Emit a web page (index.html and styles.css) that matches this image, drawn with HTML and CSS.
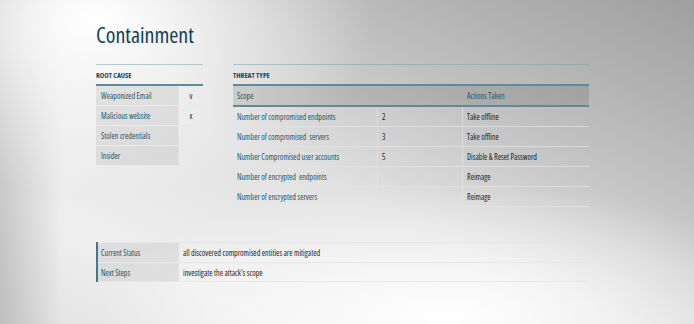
FILE: index.html
```html
<!DOCTYPE html>
<html>
<head>
<meta charset="utf-8">
<link rel="stylesheet" href="styles.css">
</head>
<body>
<div class="page">
  <h1 class="title">Containment</h1>
  <div class="top-row">
    <section class="panel root">
      <div class="panel-head">ROOT CAUSE</div>
      <div class="rc-table">
        <div class="rc-row"><div class="rc-label">Weaponized Email</div><div class="rc-val">v</div></div>
        <div class="rc-row"><div class="rc-label">Malicious website</div><div class="rc-val">x</div></div>
        <div class="rc-row"><div class="rc-label">Stolen credentials</div><div class="rc-val"></div></div>
        <div class="rc-row"><div class="rc-label">Insider</div><div class="rc-val"></div></div>
      </div>
    </section>
    <section class="panel threat">
      <div class="panel-head">THREAT TYPE</div>
      <div class="tt-table">
        <div class="tt-row tt-header"><div class="tt-scope">Scope</div><div class="tt-num"></div><div class="tt-act tt-act-h">Actions Taken</div></div>
        <div class="tt-row"><div class="tt-scope">Number of compromised endpoints</div><div class="tt-num">2</div><div class="tt-act">Take offline</div></div>
        <div class="tt-row"><div class="tt-scope">Number of compromised&nbsp; servers</div><div class="tt-num">3</div><div class="tt-act">Take offline</div></div>
        <div class="tt-row"><div class="tt-scope">Number Compromised user accounts</div><div class="tt-num">5</div><div class="tt-act">Disable &amp; Reset Password</div></div>
        <div class="tt-row"><div class="tt-scope">Number of encrypted&nbsp; endpoints</div><div class="tt-num"></div><div class="tt-act">Reimage</div></div>
        <div class="tt-row"><div class="tt-scope">Number of encrypted servers</div><div class="tt-num"></div><div class="tt-act">Reimage</div></div>
      </div>
    </section>
  </div>
  <div class="status">
    <div class="st-row"><div class="st-label">Current Status</div><div class="st-val">all discovered compromised entities are mitigated</div></div>
    <div class="st-row"><div class="st-label">Next Steps</div><div class="st-val">investigate the attack's scope</div></div>
  </div>
</div>
</body>
</html>
```
FILE: styles.css
```css
html, body {
  margin: 0;
  padding: 0;
}
body {
  width: 694px;
  height: 324px;
  overflow: hidden;
  font-family: "Open Sans", "Noto Sans", sans-serif;
  font-stretch: 78%;
  background:
    radial-gradient(ellipse 50% 42% at 64% 98%, rgba(255,255,255,1) 0%, rgba(255,255,255,0) 100%),
    radial-gradient(ellipse 40% 55% at 14% 6%, rgba(255,255,255,1) 0%, rgba(255,255,255,0) 100%),
    linear-gradient(90deg, rgba(0,0,0,0.16) 0%, rgba(0,0,0,0) 9%),
    linear-gradient(205deg, #9f9f9f 0%, #c0c0c0 30%, #e2e2e2 55%, #efefef 80%, #e2e2e2 100%);
}
.page {
  padding: 21px 105px 0 96px;
}
.title {
  margin: 0;
  font-size: 22px;
  line-height: 26px;
  font-weight: normal;
  color: #133f55;
}
.top-row {
  display: flex;
  gap: 30px;
  margin-top: 17px;
  align-items: flex-start;
}
.panel {
  border-top: 1px solid rgba(120,165,178,0.55);
}
.root { width: 107px; }
.threat { flex: 1; }
.panel-head {
  height: 19px;
  line-height: 20px;
  font-size: 7.5px;
  font-weight: bold;
  color: #1a4558;
  border-bottom: 2px solid #5a8c9b;
}
.rc-row {
  display: flex;
  height: 20px;
  border-bottom: 1px solid rgba(232,232,232,0.75);
  box-sizing: border-box;
  font-size: 8px;
  line-height: 19px;
}
.rc-label {
  width: 83px;
  padding-left: 5px;
  box-sizing: border-box;
  background: rgba(0,0,0,0.07);
  color: #245669;
  border-right: 1px solid rgba(232,232,232,0.6);
}
.rc-val {
  flex: 1;
  text-align: center;
  color: #222;
}
.tt-row {
  display: flex;
  height: 20px;
  box-sizing: border-box;
  border-bottom: 1px solid rgba(228,228,228,0.7);
  font-size: 8px;
  line-height: 19px;
}
.tt-header {
  background: rgba(0,0,0,0.11);
  border-bottom: 2px solid #5a8c9b;
  height: 21px;
}
.tt-scope {
  width: 145px;
  padding-left: 4px;
  box-sizing: border-box;
  color: #245669;
  border-right: 1px solid rgba(228,228,228,0.7);
}
.tt-num {
  width: 85px;
  padding-left: 4px;
  box-sizing: border-box;
  color: #222;
  border-right: 1px solid rgba(228,228,228,0.7);
}
.tt-header .tt-scope, .tt-header .tt-num { border-right: none; }
.tt-act {
  flex: 1;
  padding-left: 4px;
  color: #222;
}
.tt-act-h { color: #245669; }
.status {
  margin-top: 35px;
  border-left: 2px solid #3f7a8b;
}
.st-row {
  display: flex;
  height: 20px;
  box-sizing: border-box;
  border-top: 1px solid rgba(228,228,228,0.75);
  font-size: 8px;
  line-height: 19px;
}
.st-row:last-child { border-bottom: 1px solid rgba(228,228,228,0.75); }
.st-label {
  width: 81px;
  padding-left: 3px;
  box-sizing: border-box;
  background: rgba(0,0,0,0.07);
  color: #245669;
}
.st-val {
  flex: 1;
  padding-left: 4px;
  color: #222;
}
```
